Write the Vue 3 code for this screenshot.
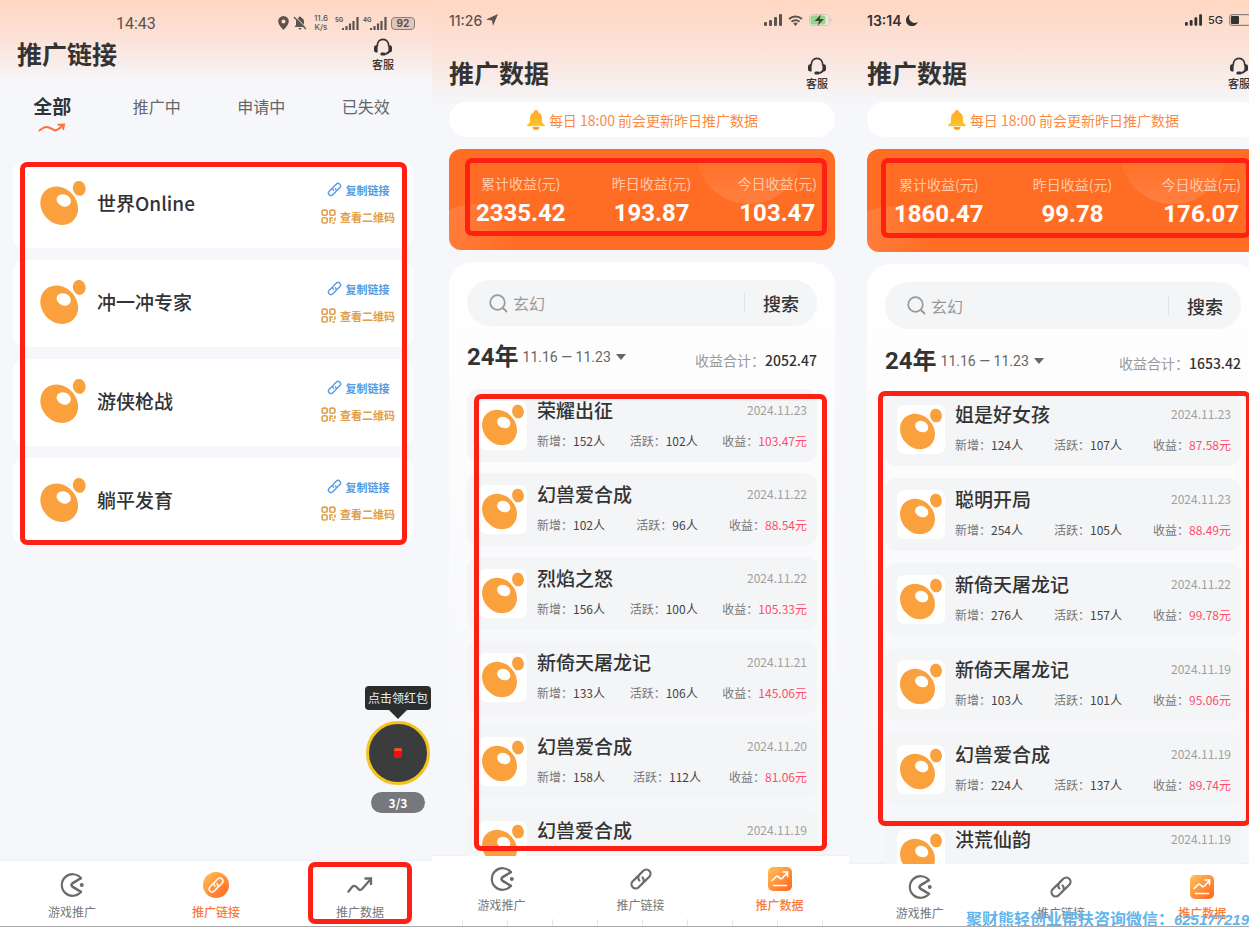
<template>
  <div class="board">
    <svg class="sprite" width="0" height="0" aria-hidden="true">
      <defs>
        <linearGradient id="warm" x1="0" y1="0" x2="1" y2="1">
          <stop offset="0" stop-color="#ffc35a" />
          <stop offset="1" stop-color="#ff6420" />
        </linearGradient>
        <linearGradient id="gold" x1="0" y1="0" x2="0" y2="1">
          <stop offset="0" stop-color="#ffa92e" />
          <stop offset="1" stop-color="#ffc425" />
        </linearGradient>
      </defs>
      <symbol id="logo" viewBox="0 0 48 48">
        <ellipse cx="20.5" cy="26.5" rx="16.2" ry="18.9" fill="#faa03c" transform="rotate(-42 20.5 26.5)" />
        <ellipse cx="39" cy="10.5" rx="5.9" ry="6.9" fill="#faa03c" transform="rotate(-12 39 10.5)" />
        <ellipse cx="24.7" cy="21.6" rx="6.8" ry="5.5" fill="#fff" transform="rotate(25 24.7 21.6)" />
      </symbol>
      <symbol id="headset" viewBox="0 0 22 20">
        <path d="M4.500 9.500C4.500 4.500 7.300 1.500 11 1.500s6.500 3 6.500 8M17.800 14.500c-.6 2-2 3-4.300 3.200" fill="none" stroke="currentColor" stroke-width="2" />
        <path d="M5 8v8H3.500A2.500 2.500 0 0 1 1 13.500v-3A2.500 2.500 0 0 1 3.500 8zM17 8v8h1.500a2.500 2.500 0 0 0 2.500-2.500v-3A2.500 2.500 0 0 0 18.500 8z" fill="currentColor" />
        <rect x="8" y="16" width="6" height="3.500" rx="1.700" fill="currentColor" />
      </symbol>
      <symbol id="chain" viewBox="0 0 24 24">
        <g fill="none" stroke="currentColor" stroke-width="2.2" stroke-linecap="round" transform="rotate(-45 12 12)">
          <path d="M10.500 8H4a4 4 0 0 0 0 8h6a4 4 0 0 0 4-4" />
          <path d="M13.500 16H20a4 4 0 0 0 0-8h-6a4 4 0 0 0-4 4" />
        </g>
      </symbol>
      <symbol id="qr" viewBox="0 0 14 14">
        <g fill="none" stroke="currentColor" stroke-width="1.500">
          <rect x="1" y="1" width="4.800" height="4.800" rx="1.600" />
          <rect x="8.200" y="1" width="4.800" height="4.800" rx="1.600" />
          <rect x="1" y="8.200" width="4.800" height="4.800" rx="1.600" />
          <path d="M8.500 13V8.500H11M13 8v3M10.500 13H13M10.700 10.500v1" />
        </g>
      </symbol>
      <symbol id="game" viewBox="0 0 26 26">
        <path d="M22 6.200A10.800 10.800 0 1 0 22 19.800L13.500 14.800Q11.500 13 13.500 11.200Z" fill="none" stroke="#6b6b6b" stroke-width="2.200" stroke-linejoin="round" />
        <path d="M21 7.500v11" stroke="#fff" stroke-width="4.500" />
        <path d="M22 6.200L13.500 11.200Q11.500 13 13.500 14.800L22 19.800" fill="none" stroke="#6b6b6b" stroke-width="2.200" stroke-linecap="round" />
        <circle cx="22.800" cy="13" r="2" fill="#6b6b6b" />
      </symbol>
      <symbol id="link" viewBox="0 0 26 26">
        <g fill="none" stroke="#6b6b6b" stroke-width="2.200" stroke-linecap="round" transform="rotate(-45 13 13)">
          <path d="M12.500 8.800H5.500a4.200 4.200 0 0 0 0 8.400h5.500a4.200 4.200 0 0 0 4.200-4.200" />
          <path d="M13.500 17.200h7a4.200 4.200 0 0 0 0-8.400H15a4.200 4.200 0 0 0-4.200 4.200" />
        </g>
      </symbol>
      <symbol id="link-on" viewBox="0 0 26 26">
        <circle cx="13" cy="13" r="13" fill="url(#warm)" />
        <g fill="none" stroke="#fff3e6" stroke-width="1.700" stroke-linecap="round" transform="rotate(-45 13 13)">
          <path d="M12.500 10H7.500a3 3 0 0 0 0 6h4a3 3 0 0 0 3-3" />
          <path d="M13.500 16h5a3 3 0 0 0 0-6h-4a3 3 0 0 0-3 3" />
        </g>
      </symbol>
      <symbol id="data" viewBox="0 0 26 26">
        <path d="M1.500 19.500L5.500 14.500Q7.500 13 9.500 15L12 17.500Q13.500 18.500 15 17L22.500 8.500" fill="none" stroke="#6b6b6b" stroke-width="2.300" stroke-linecap="round" />
        <path d="M17.500 6.500H24v6.500" fill="none" stroke="#6b6b6b" stroke-width="2.300" />
      </symbol>
      <symbol id="data-on" viewBox="0 0 26 26">
        <rect x="1" y="1" width="24" height="24" rx="5" fill="url(#warm)" />
        <path d="M5 14.500l4.300-4q1-.8 2 .2l2 1.800q1 .6 1.900-.3L20 7M16 6h4.500v4.500M6.500 19.500h13" fill="none" stroke="#fff" stroke-width="1.600" stroke-linecap="round" />
      </symbol>
      <symbol id="signal" viewBox="0 0 18 12">
        <rect x="0" y="8" width="3" height="4" rx="1" fill="currentColor" />
        <rect x="5" y="6" width="3" height="6" rx="1" fill="currentColor" />
        <rect x="10" y="3" width="3" height="9" rx="1" fill="currentColor" />
        <rect x="15" y="0" width="3" height="12" rx="1" fill="currentColor" />
      </symbol>
      <symbol id="signal-thin" viewBox="0 0 17 13">
        <path d="M1 13v-2M4.500 13V9M8 13V6.500M11.500 13V4M15.500 13V0" stroke="currentColor" stroke-width="2.200" />
      </symbol>
    </svg>

    <section v-for="phone in phones" :key="phone.id" class="phone" :class="'phone-' + phone.id">
      <div class="screen">
        <div class="status">
          <template v-if="phone.id === 'links'">
            <span class="clock">14:43</span>
            <span class="status-icons">
              <svg width="11" height="14" viewBox="0 0 11 14"><path fill-rule="evenodd" d="M5.500 0A5.300 5.300 0 0 0 .2 5.300C.2 9 5.500 14 5.500 14s5.300-5 5.300-8.700A5.300 5.300 0 0 0 5.500 0zm0 3.400a2 2 0 1 1 0 4 2 2 0 0 1 0-4z" fill="currentColor" /></svg>
              <svg width="14" height="14" viewBox="0 0 14 14"><path d="M7 .5a1.200 1.200 0 0 1 1.200 1.200A4 4 0 0 1 11 5.500V9l1.500 2h-11L3 9V5.500a4 4 0 0 1 2.800-3.800A1.200 1.200 0 0 1 7 .5zM5.500 12h3a1.500 1.500 0 0 1-3 0z" fill="currentColor" /><path d="M1 1l12 12" stroke="currentColor" stroke-width="1.500" /><path d="M2.200.6l11.400 11.400" stroke="#fddccb" stroke-width="1" /></svg>
              <span class="speed"><span>11.6</span><span>K/s</span></span>
              <span class="net"><small>5G</small><svg width="17" height="13"><use href="#signal-thin" /></svg></span>
              <span class="net"><small>4G</small><svg width="17" height="13"><use href="#signal-thin" /></svg></span>
              <span class="battery-text">92</span>
            </span>
          </template>
          <template v-else-if="phone.id === 'week'">
            <span class="clock">11:26
              <svg width="12" height="12" viewBox="0 0 12 12"><path d="M12 0L7 12 6 6.500 0 5.500z" fill="currentColor" /></svg>
            </span>
            <span class="status-icons">
              <svg width="18" height="12"><use href="#signal" /></svg>
              <svg width="15" height="11" viewBox="0 0 15 11"><path d="M1 4a9.500 9.500 0 0 1 13 0M3.500 6.700a6 6 0 0 1 8 0" fill="none" stroke="currentColor" stroke-width="1.900" /><path d="M5.300 8.500a3.300 3.300 0 0 1 4.400 0L7.500 11z" fill="currentColor" /></svg>
              <svg width="23" height="12" viewBox="0 0 23 12"><rect x=".5" y=".5" width="19.500" height="11" rx="3" fill="#f6e8df" stroke="#d5c7be" /><rect x="1.500" y="1.500" width="15" height="9" rx="2" fill="#93d78f" /><path d="M21.500 4.500q1.500 1.500 0 3" stroke="#c9bbb2" fill="none" /><path d="M12 .5L5.500 7H10l-1.500 4.800L15 5h-4.200z" fill="#4b4340" /></svg>
            </span>
          </template>
          <template v-else>
            <span class="clock">13:14
              <svg width="12" height="12" viewBox="0 0 12 12"><path d="M4 .5A6 6 0 1 0 11.700 8 5.500 5.500 0 0 1 4 .5z" fill="currentColor" /></svg>
            </span>
            <span class="status-icons">
              <svg width="17" height="12"><use href="#signal" /></svg>
              <span>5G</span>
              <svg width="24" height="12" viewBox="0 0 24 12"><rect x=".7" y=".7" width="20.600" height="10.600" rx="2.500" fill="none" stroke="#8b8480" stroke-width="1.200" /><rect x="2" y="2" width="8" height="8" rx="1" fill="currentColor" /></svg>
            </span>
          </template>
        </div>

        <header class="header">
          <h1>{{ phone.title }}</h1>
          <button class="service" type="button">
            <svg><use href="#headset" /></svg>
            <span>客服</span>
          </button>
        </header>

        <!-- 推广链接 -->
        <template v-if="phone.id === 'links'">
          <div class="filters">
            <button
              v-for="(filter, index) in filters"
              :key="filter"
              type="button"
              :class="{ active: activeFilter === index }"
              @click="activeFilter = index"
            >
              <span>{{ filter }}</span>
              <svg v-if="activeFilter === index" width="28" height="10" viewBox="0 0 28 10">
                <path d="M1.500 7.500Q7 2.500 11 4.500T17 7.500Q20 7 24 3M20.500 1.800l5.500-.3-.8 4.500" fill="none" stroke="#fb7440" stroke-width="2" stroke-linecap="round" />
              </svg>
            </button>
          </div>
          <div class="links">
            <ul>
              <li v-for="name in linkNames" :key="name" class="link-card">
                <svg class="link-logo"><use href="#logo" /></svg>
                <h2>{{ name }}</h2>
                <div class="link-actions">
                  <button type="button" class="copy">
                    <svg><use href="#chain" /></svg>复制链接
                  </button>
                  <button type="button" class="view">
                    <svg><use href="#qr" /></svg>查看二维码
                  </button>
                </div>
              </li>
            </ul>
            <i class="mark mark-links"></i>
          </div>
          <div class="packet">
            <span class="packet-tip">点击领红包</span>
            <button type="button" class="packet-ring" aria-label="领红包"><i></i></button>
            <span class="packet-count">3/3</span>
          </div>
        </template>

        <!-- 推广数据 -->
        <template v-else>
          <p class="notice">
            <svg width="20" height="20" viewBox="0 0 20 20">
              <path d="M10 0a2.300 2.300 0 0 1 2.200 2.200C14.800 3.300 16 5.500 16 8v3.500c0 1.300 1 2 2.400 3 .9.700.5 1.800-.6 1.800H2.200c-1.100 0-1.500-1.100-.6-1.800C3 13.500 4 12.800 4 11.500V8c0-2.500 1.200-4.700 3.800-5.800A2.300 2.300 0 0 1 10 0z" fill="url(#gold)" />
              <path d="M6.500 17h7a3.500 3 0 0 1-7 0z" fill="#ff9f2b" />
            </svg>
            每日 18:00 前会更新昨日推广数据
          </p>
          <div class="income">
            <dl>
              <div v-for="item in phone.income" :key="item.label">
                <dt>{{ item.label }}</dt>
                <dd>{{ item.value }}</dd>
              </div>
            </dl>
            <i class="mark mark-income"></i>
          </div>
          <div class="panel">
            <form class="search" @submit.prevent>
              <svg width="19" height="19" viewBox="0 0 19 19"><circle cx="8.500" cy="8.500" r="7.300" fill="none" stroke="#999" stroke-width="1.700" /><path d="M14.500 14.500l3 3" stroke="#999" stroke-width="1.800" stroke-linecap="round" /></svg>
              <input type="text" placeholder="玄幻" aria-label="搜索游戏" />
              <button type="submit">搜索</button>
            </form>
            <div class="period">
              <strong>24年</strong>
              <button type="button">11.16 — 11.23<i></i></button>
              <p>收益合计：<b>{{ phone.total }}</b></p>
            </div>
            <div class="records">
              <ul>
                <li v-for="(row, index) in phone.rows" :key="index" class="record">
                  <span class="tile"><svg><use href="#logo" /></svg></span>
                  <div class="record-body">
                    <div class="record-top">
                      <h2>{{ row[0] }}</h2>
                      <time>{{ row[1] }}</time>
                    </div>
                    <div v-if="row[2]" class="record-stats">
                      <span>新增：<b>{{ row[2] }}人</b></span>
                      <span>活跃：<b>{{ row[3] }}人</b></span>
                      <span>收益：<em>{{ row[4] }}元</em></span>
                    </div>
                  </div>
                </li>
              </ul>
              <i class="mark mark-records"></i>
            </div>
          </div>
        </template>

        <nav class="tabbar">
          <a v-for="tab in tabs" :key="tab.icon" href="#" :class="{ active: phone.tab === tab.icon }" @click.prevent>
            <svg><use :href="'#' + tab.icon + (phone.tab === tab.icon ? '-on' : '')" /></svg>
            <span>{{ tab.label }}</span>
            <i v-if="phone.id === 'links' && tab.icon === 'data'" class="mark mark-tab"></i>
          </a>
        </nav>
      </div>
    </section>

    <p class="watermark">聚财熊轻创业帮扶咨询微信：<i>625177219</i></p>
  </div>
</template>

<script setup>
import { ref } from 'vue';

const activeFilter = ref(0);
const filters = ['全部', '推广中', '申请中', '已失效'];
const linkNames = ['世界Online', '冲一冲专家', '游侠枪战', '躺平发育'];

const tabs = [
  { icon: 'game', label: '游戏推广' },
  { icon: 'link', label: '推广链接' },
  { icon: 'data', label: '推广数据' }
];

const makeIncome = (all, yesterday, today) => [
  { label: '累计收益(元)', value: all },
  { label: '昨日收益(元)', value: yesterday },
  { label: '今日收益(元)', value: today }
];

// rows: name, date, new users, active users, income
const phones = [
  { id: 'links', title: '推广链接', tab: 'link' },
  {
    id: 'week',
    title: '推广数据',
    tab: 'data',
    income: makeIncome('2335.42', '193.87', '103.47'),
    total: '2052.47',
    rows: [
      ['荣耀出征', '2024.11.23', 152, 102, '103.47'],
      ['幻兽爱合成', '2024.11.22', 102, 96, '88.54'],
      ['烈焰之怒', '2024.11.22', 156, 100, '105.33'],
      ['新倚天屠龙记', '2024.11.21', 133, 106, '145.06'],
      ['幻兽爱合成', '2024.11.20', 158, 112, '81.06'],
      ['幻兽爱合成', '2024.11.19']
    ]
  },
  {
    id: 'wide',
    title: '推广数据',
    tab: 'data',
    income: makeIncome('1860.47', '99.78', '176.07'),
    total: '1653.42',
    rows: [
      ['姐是好女孩', '2024.11.23', 124, 107, '87.58'],
      ['聪明开局', '2024.11.23', 254, 105, '88.49'],
      ['新倚天屠龙记', '2024.11.22', 276, 157, '99.78'],
      ['新倚天屠龙记', '2024.11.19', 103, 101, '95.06'],
      ['幻兽爱合成', '2024.11.19', 224, 137, '89.74'],
      ['洪荒仙韵', '2024.11.19']
    ]
  }
];
</script>

<style>
body {
  margin: 0;
}
</style>

<style scoped>
.board {
  position: relative;
  display: grid;
  grid-template-columns: 432fr 417fr 400fr;
  height: 100vh;
  overflow: hidden;
  box-sizing: border-box;
  border-bottom: 1px solid #aaa;
  font-family: "Noto Sans CJK SC", "Noto Sans", sans-serif;
  color: #333;
}

.sprite {
  position: absolute;
}

.board * {
  box-sizing: border-box;
}

h1, h2, p, ul, dl, dd {
  margin: 0;
  padding: 0;
}

ul {
  list-style: none;
}

button {
  padding: 0;
  border: 0;
  background: none;
  font: inherit;
  color: inherit;
  cursor: pointer;
}

svg {
  flex-shrink: 0;
}

.phone {
  --tabbar-height: 70px;
  --row-gap: 11px;
  min-width: 0;
  min-height: 0;
  overflow: hidden;
}

.phone-links {
  --tabbar-height: 65px;
}

.phone-wide {
  --tabbar-height: 62px;
  --row-gap: 12px;
}

.screen {
  position: relative;
  display: flex;
  flex-direction: column;
  height: 100%;
  background: linear-gradient(#ffd7c1, #fbe2d8 50px, #f6f7fb 106px);
}

.phone-links .screen {
  background: linear-gradient(#ffd7c1, #fbe2d8 40px, #f6f7fb 84px);
}

/* the last screen runs past the right edge of the board */
.phone-wide .screen {
  width: 106%;
}

/* status bar */
.status {
  display: flex;
  align-items: center;
  justify-content: space-between;
  height: 40px;
  padding: 0 17px;
  flex-shrink: 0;
  color: #5c5350;
  font-family: Inter, "Liberation Sans", sans-serif;
  font-size: 14px;
  font-weight: 500;
}

.clock {
  display: flex;
  align-items: center;
  gap: 4px;
}

.status-icons {
  display: flex;
  align-items: center;
  gap: 6px;
}

.phone-links .status {
  height: 34px;
  padding: 12px 17px 0 116px;
}

.phone-links .clock {
  font-family: Roboto, sans-serif;
  font-size: 16px;
  font-weight: 400;
}

.phone-links .status-icons {
  gap: 4px;
}

.phone-wide .status {
  padding-left: 18px;
  padding-right: 20px;
  color: #333;
}

.phone-wide .clock {
  font-weight: 600;
}

.phone-wide .status-icons {
  font-size: 11px;
}

.speed {
  display: flex;
  flex-direction: column;
  align-items: center;
  width: 20px;
  font-size: 8px;
  line-height: 9px;
}

.net {
  display: flex;
  align-items: flex-start;
}

.net small {
  width: 7px;
  font-size: 6px;
  line-height: 6px;
  font-weight: 700;
}

.battery-text {
  width: 24px;
  border: 1px solid #887c77;
  border-radius: 4px;
  background: #e0c6ba;
  font-size: 10px;
  line-height: 11px;
  font-weight: 700;
  text-align: center;
}

/* page header */
.header {
  display: flex;
  align-items: center;
  justify-content: space-between;
  height: 62px;
  padding: 6px 21px 0 17px;
  flex-shrink: 0;
}

.phone-links .header {
  height: 41px;
  padding: 0 38px 0 17px;
}

.phone-wide .header {
  padding-left: 18px;
  padding-right: 23px;
}

.header h1 {
  padding-bottom: 4px;
  font-size: 25px;
  line-height: 36px;
  font-weight: 700;
}

.service {
  display: flex;
  flex-direction: column;
  align-items: center;
  font-size: 11px;
  line-height: 16px;
  font-weight: 500;
}

.service svg {
  width: 20px;
  height: 18px;
}

/* link list */
.filters {
  display: grid;
  grid-template-columns: repeat(4, 1fr);
  height: 86px;
  padding: 17px 14px 0 0;
  flex-shrink: 0;
}

.filters button {
  display: flex;
  flex-direction: column;
  align-items: center;
  gap: 3px;
  font-size: 16px;
  line-height: 28px;
  color: #666;
}

.filters button.active {
  font-size: 19px;
  font-weight: 700;
  color: #333;
}

.links {
  position: relative;
  padding: 0 19px 0 13px;
}

.links ul {
  display: flex;
  flex-direction: column;
  gap: 12px;
}

.link-card {
  display: flex;
  align-items: center;
  height: 87px;
  padding: 0 18px 3px 24px;
  border-radius: 12px;
  background: #fff;
}

.link-logo {
  width: 52px;
  height: 52px;
}

.link-card h2 {
  flex: 1;
  padding-left: 8px;
  font-size: 19px;
  line-height: 28px;
  font-weight: 500;
}

.link-actions {
  display: flex;
  flex-direction: column;
  align-items: center;
  gap: 7px;
}

.link-actions button {
  display: flex;
  align-items: center;
  gap: 4px;
  font-size: 11px;
  line-height: 20px;
  font-weight: 700;
}

.link-actions svg {
  width: 15px;
  height: 15px;
}

.copy {
  color: #569be0;
}

.view {
  color: #e0a04c;
}

.mark {
  position: absolute;
  z-index: 2;
  border: 5px solid #ff2015;
  border-radius: 7px;
  pointer-events: none;
}

.mark-links {
  inset: 1px 25px 0 20px;
}

.packet {
  position: absolute;
  right: 1px;
  bottom: 113px;
  display: flex;
  flex-direction: column;
  align-items: center;
}

.packet-tip {
  position: relative;
  padding: 0 3px;
  margin-bottom: 11px;
  border-radius: 4px;
  background: #2c2e2e;
  color: #eee;
  font-size: 12px;
  line-height: 24px;
}

.packet-tip::after {
  content: "";
  position: absolute;
  top: 100%;
  left: 50%;
  margin-left: -9px;
  border: 9px solid transparent;
  border-top-color: #2c2e2e;
  border-bottom: 0;
}

.packet-ring {
  display: flex;
  align-items: center;
  justify-content: center;
  width: 64px;
  height: 64px;
  border: 3px solid #f5c31d;
  border-radius: 50%;
  background: #3b3c3e;
}

.packet-ring i {
  width: 8px;
  height: 10px;
  border-radius: 2px;
  background: linear-gradient(#f4502c 35%, #f00f0a 35%);
}

.packet-count {
  width: 54px;
  margin-top: 7px;
  border-radius: 11px;
  background: #77787d;
  color: #fff;
  font-size: 12px;
  line-height: 21px;
  font-weight: 700;
  text-align: center;
}

/* data screens */
.notice {
  display: flex;
  align-items: center;
  justify-content: center;
  gap: 3px;
  height: 35px;
  margin: 0 14px 12px 17px;
  flex-shrink: 0;
  border-radius: 18px;
  background: #fff;
  color: #fb8a45;
  font-size: 14px;
}

.income {
  position: relative;
  height: 101px;
  margin: 0 14px 12px 17px;
  padding: 22px 18px 0 27px;
  flex-shrink: 0;
  overflow: hidden;
  border-radius: 12px;
  background: #ff6d24;
  color: #fff;
}

.income::before,
.income::after {
  content: "";
  position: absolute;
  width: 106px;
  height: 106px;
  border-radius: 50%;
}

.income::before {
  top: -51px;
  right: 33px;
  background: linear-gradient(rgba(255, 255, 255, 0) 50%, rgba(255, 255, 255, 0.13));
}

.income::after {
  left: -28px;
  bottom: -60px;
  background: linear-gradient(100deg, rgba(255, 255, 255, 0.16), rgba(255, 255, 255, 0) 80%);
}

.income dl {
  position: relative;
  z-index: 1;
  display: flex;
  justify-content: space-between;
  text-align: center;
}

.income dt {
  font-size: 14px;
  line-height: 24px;
  color: #ffc9a9;
}

.income dd {
  font-family: Roboto, sans-serif;
  font-size: 24px;
  line-height: 36px;
  font-weight: 700;
}

.mark-income {
  inset: 9px 8px 14px 16px;
}

.panel {
  display: flex;
  flex-direction: column;
  flex: 1;
  min-height: 0;
  margin: 0 14px 0 17px;
  padding: 18px 18px 0;
  border-radius: 24px 24px 0 0;
  background: linear-gradient(#fff, #fcfcfd 30%, #f6f7fb 85%);
}

.search {
  display: flex;
  align-items: center;
  height: 46px;
  padding-left: 22px;
  flex-shrink: 0;
  border-radius: 23px;
  background: #f4f5f7;
}

.search input {
  flex: 1;
  min-width: 0;
  padding: 0 5px;
  border: 0;
  outline: 0;
  background: none;
  font: inherit;
  font-size: 16px;
}

.search input::placeholder {
  color: #999;
  opacity: 1;
}

.search button {
  width: 73px;
  border-left: 1px solid #e2e3e6;
  font-size: 18px;
  line-height: 20px;
  font-weight: 500;
}

.period {
  display: flex;
  align-items: center;
  height: 63px;
  padding-bottom: 1px;
  flex-shrink: 0;
}

.period strong {
  font-family: Roboto, "Noto Sans CJK SC", sans-serif;
  font-size: 24px;
  line-height: 34px;
}

.period button {
  display: flex;
  align-items: center;
  gap: 5px;
  margin-left: 4px;
  color: #666;
  font-family: Roboto, sans-serif;
  font-size: 14px;
}

.period button i {
  border: 5px solid transparent;
  border-top: 6px solid #666;
  border-bottom: 0;
}

.period p {
  margin-left: auto;
  padding-top: 5px;
  color: #999;
  font-size: 14px;
}

.period b {
  font-weight: 500;
  color: #333;
}

.records {
  position: relative;
  display: flex;
  flex: 1;
  min-height: 0;
}

.records ul {
  display: flex;
  flex-direction: column;
  gap: var(--row-gap);
  flex: 1;
  min-width: 0;
  overflow: hidden;
}

.record {
  display: flex;
  gap: 10px;
  height: 73px;
  padding: 12px 10px 0 12px;
  flex-shrink: 0;
  border-radius: 12px;
  background: #f4f5f7;
}

.tile {
  width: 48px;
  height: 49px;
  border-radius: 7px;
  background: #fff;
}

.tile svg {
  display: block;
  width: 48px;
  height: 48px;
}

.record-body {
  display: flex;
  flex-direction: column;
  gap: 14px;
  flex: 1;
}

.record-top,
.record-stats {
  display: flex;
  align-items: center;
  justify-content: space-between;
}

.record h2 {
  font-size: 19px;
  line-height: 18px;
  font-weight: 500;
}

.record time {
  color: #a0a0a0;
  font-size: 12px;
  line-height: 18px;
}

.record-stats {
  color: #777;
  font-size: 12px;
  line-height: 16px;
}

.record-stats b {
  font-weight: 400;
  color: #444;
}

.record-stats em {
  font-style: normal;
  color: #ff4d6c;
}

.mark-records {
  inset: 5px -10px 5px 7px;
}

.phone-wide .notice,
.phone-wide .income,
.phone-wide .panel {
  margin-left: 18px;
}

.phone-wide .income {
  height: 103px;
  padding-top: 23px;
}

.phone-wide .search {
  height: 47px;
}

.phone-wide .period {
  height: 64px;
}

.phone-wide .mark-income {
  left: 14px;
}

.phone-wide .mark-records {
  inset: -2px -10px 38px -7px;
}

/* bottom navigation */
.tabbar {
  display: grid;
  grid-template-columns: repeat(3, 1fr);
  height: var(--tabbar-height);
  margin-top: auto;
  flex-shrink: 0;
  background: #fff;
  box-shadow: 0 -1px 2px rgba(0, 0, 0, 0.04);
}

.phone-week .tabbar {
  background: repeating-linear-gradient(90deg, #fff 0 30px, #e8e8e8 30px 31px, #fff 31px 45px) bottom / 100% 7px no-repeat #fff;
}

.tabbar a {
  position: relative;
  display: flex;
  flex-direction: column;
  align-items: center;
  gap: 4px;
  padding-top: 10px;
  color: #777;
  font-size: 12px;
  line-height: 18px;
  text-decoration: none;
}

.phone-links .tabbar a {
  gap: 5px;
  padding-top: 11px;
}

.tabbar a.active {
  color: #fa7a38;
  font-weight: 500;
}

.tabbar svg {
  width: 26px;
  height: 26px;
}

.mark-tab {
  inset: 1px 20px 2px;
}

.watermark {
  position: absolute;
  right: 0;
  bottom: -4px;
  z-index: 3;
  color: #62b5ee;
  font-size: 16px;
  line-height: 20px;
  font-weight: 700;
  white-space: nowrap;
}

.watermark i {
  font-family: "Liberation Sans", sans-serif;
  font-size: 15px;
}
</style>
